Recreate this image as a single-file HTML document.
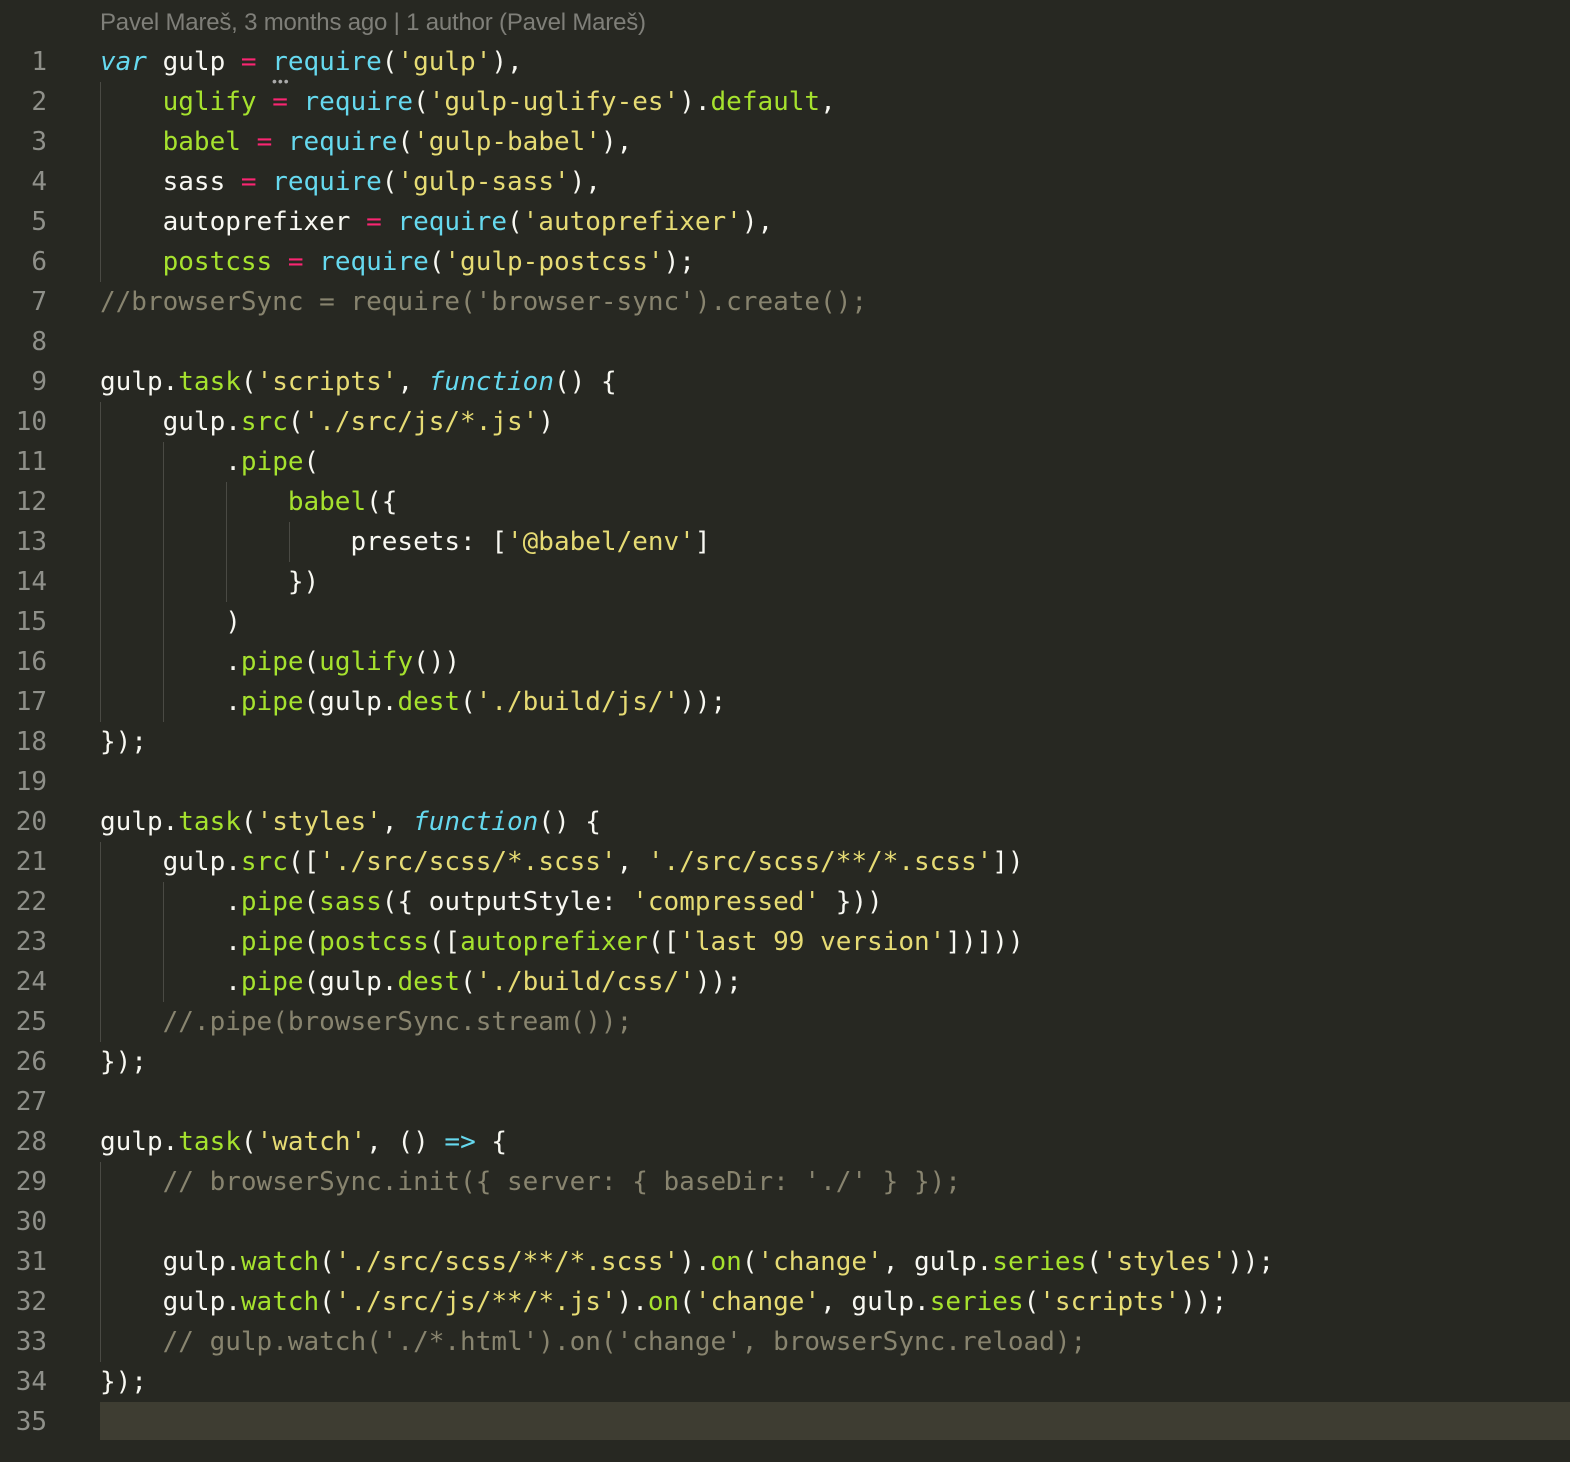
<!DOCTYPE html>
<html><head><meta charset="utf-8"><style>
html,body{margin:0;padding:0;background:#272822;width:1570px;height:1462px;overflow:hidden}
#hdr{position:absolute;left:100px;top:9px;font:24px "Liberation Sans",sans-serif;color:#7f7f79;letter-spacing:-0.2px}
#hl{position:absolute;left:100px;top:1402px;width:1470px;height:38px;background:#3e3d32}
.ln{position:absolute;left:0;width:47px;text-align:right;font:26px "DejaVu Sans Mono",monospace;color:#8f908a;line-height:40px}
pre{position:absolute;left:100px;top:42px;margin:0;font:26px "DejaVu Sans Mono",monospace;line-height:40px;color:#f8f8f2}
.g{position:absolute;width:1px;background:#4a4a44}
.k{color:#66d9ef;font-style:italic}.c{color:#66d9ef}.p{color:#f92672}.f{color:#a6e22e}.s{color:#e6db74}.m{color:#88846f}
#dots{position:absolute;left:272px;top:73px;font:14px "Liberation Sans",sans-serif;color:#aaa;letter-spacing:1px}
</style></head><body>
<div id="hdr">Pavel Mareš, 3 months ago | 1 author (Pavel Mareš)</div>
<div id="hl"></div>
<div class="ln" style="top:42px">1<br>2<br>3<br>4<br>5<br>6<br>7<br>8<br>9<br>10<br>11<br>12<br>13<br>14<br>15<br>16<br>17<br>18<br>19<br>20<br>21<br>22<br>23<br>24<br>25<br>26<br>27<br>28<br>29<br>30<br>31<br>32<br>33<br>34<br>35</div>
<div class="g" style="left:100px;top:82px;height:200px"></div>
<div class="g" style="left:100px;top:402px;height:320px"></div>
<div class="g" style="left:100px;top:842px;height:200px"></div>
<div class="g" style="left:100px;top:1162px;height:200px"></div>
<div class="g" style="left:163px;top:442px;height:280px"></div>
<div class="g" style="left:163px;top:882px;height:120px"></div>
<div class="g" style="left:226px;top:482px;height:120px"></div>
<div class="g" style="left:289px;top:522px;height:40px"></div>
<div id="dots">•••</div>
<pre><span class="k">var</span> gulp <span class="p">=</span> <span class="c">require</span>(<span class="s">'gulp'</span>),
    <span class="f">uglify</span> <span class="p">=</span> <span class="c">require</span>(<span class="s">'gulp-uglify-es'</span>).<span class="f">default</span>,
    <span class="f">babel</span> <span class="p">=</span> <span class="c">require</span>(<span class="s">'gulp-babel'</span>),
    sass <span class="p">=</span> <span class="c">require</span>(<span class="s">'gulp-sass'</span>),
    autoprefixer <span class="p">=</span> <span class="c">require</span>(<span class="s">'autoprefixer'</span>),
    <span class="f">postcss</span> <span class="p">=</span> <span class="c">require</span>(<span class="s">'gulp-postcss'</span>);
<span class="m">//browserSync = require('browser-sync').create();</span>

gulp.<span class="f">task</span>(<span class="s">'scripts'</span>, <span class="k">function</span>() {
    gulp.<span class="f">src</span>(<span class="s">'./src/js/*.js'</span>)
        .<span class="f">pipe</span>(
            <span class="f">babel</span>({
                presets: [<span class="s">'@babel/env'</span>]
            })
        )
        .<span class="f">pipe</span>(<span class="f">uglify</span>())
        .<span class="f">pipe</span>(gulp.<span class="f">dest</span>(<span class="s">'./build/js/'</span>));
});

gulp.<span class="f">task</span>(<span class="s">'styles'</span>, <span class="k">function</span>() {
    gulp.<span class="f">src</span>([<span class="s">'./src/scss/*.scss'</span>, <span class="s">'./src/scss/**/*.scss'</span>])
        .<span class="f">pipe</span>(<span class="f">sass</span>({ outputStyle: <span class="s">'compressed'</span> }))
        .<span class="f">pipe</span>(<span class="f">postcss</span>([<span class="f">autoprefixer</span>([<span class="s">'last 99 version'</span>])]))
        .<span class="f">pipe</span>(gulp.<span class="f">dest</span>(<span class="s">'./build/css/'</span>));
    <span class="m">//.pipe(browserSync.stream());</span>
});

gulp.<span class="f">task</span>(<span class="s">'watch'</span>, () <span class="c">=&gt;</span> {
    <span class="m">// browserSync.init({ server: { baseDir: './' } });</span>

    gulp.<span class="f">watch</span>(<span class="s">'./src/scss/**/*.scss'</span>).<span class="f">on</span>(<span class="s">'change'</span>, gulp.<span class="f">series</span>(<span class="s">'styles'</span>));
    gulp.<span class="f">watch</span>(<span class="s">'./src/js/**/*.js'</span>).<span class="f">on</span>(<span class="s">'change'</span>, gulp.<span class="f">series</span>(<span class="s">'scripts'</span>));
    <span class="m">// gulp.watch('./*.html').on('change', browserSync.reload);</span>
});
</pre>
</body></html>
